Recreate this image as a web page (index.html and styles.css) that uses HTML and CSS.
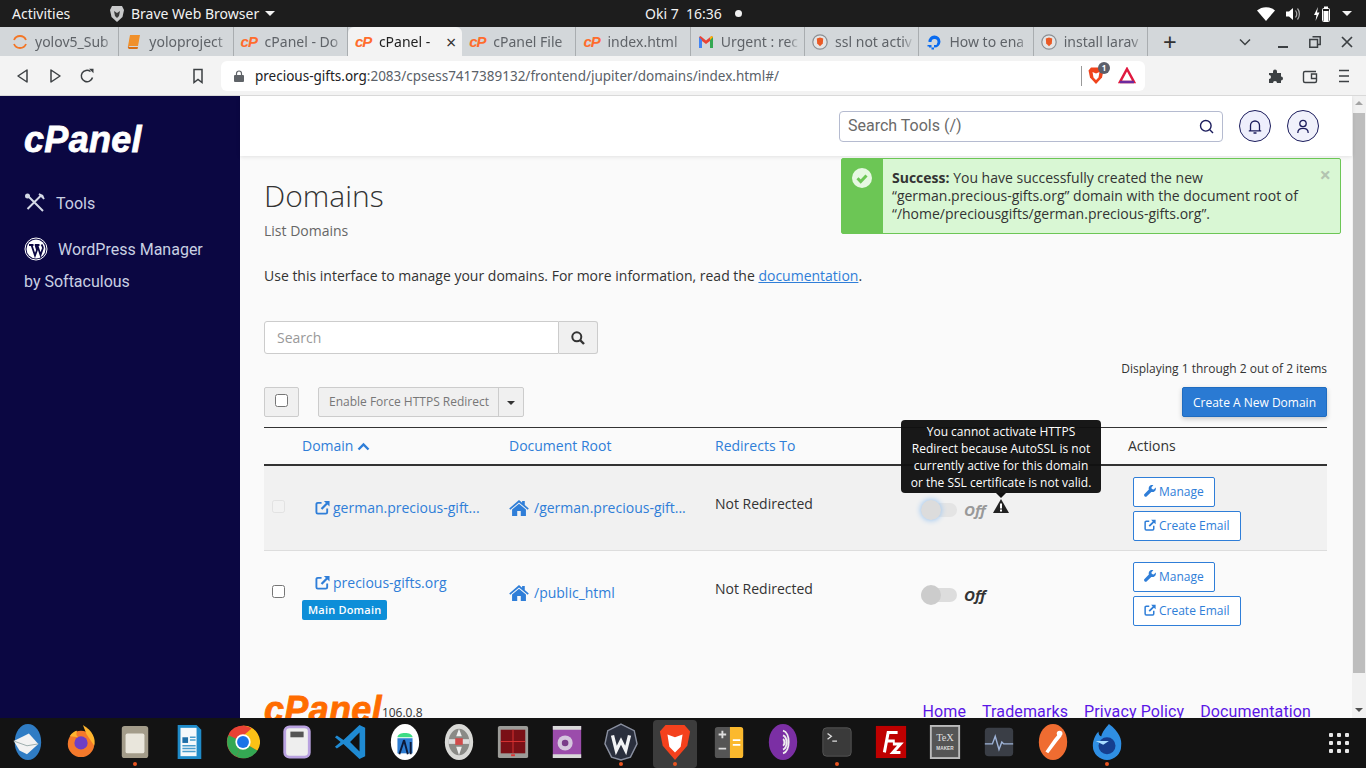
FILE: index.html
```html
<!DOCTYPE html>
<html lang="en">
<head>
  <meta charset="UTF-8" />
  <title>Domains - cPanel</title>
  <link rel="stylesheet" href="styles.css">
</head>
<body>
  <svg class="defs" width="0" height="0">
    <symbol id="i-ext" viewBox="0 0 16 16">
      <path d="M7 3H3a1.5 1.5 0 0 0-1.500 1.500v8.500A1.500 1.500 0 0 0 3 14.500h8.500A1.500 1.500 0 0 0 13 13V9" fill="none" stroke="currentColor" stroke-width="2"/>
      <path d="M9.500 1H15.500V7L13.300 4.900 7.800 10.400 6.100 8.700 11.600 3.200Z" fill="currentColor"/>
    </symbol>
    <symbol id="i-home" viewBox="0 0 22 18">
      <path d="M11 0 14.500 3V1.200H17.500V5.600L22 9.500 20.800 11 11 2.700 1.200 11 0 9.500Z" fill="currentColor"/>
      <path d="M11 4.300 18.800 10.800V18H13V12.500H9V18H3.200V10.800Z" fill="currentColor"/>
    </symbol>
    <symbol id="i-wrench" viewBox="0 0 16 16">
      <path d="M15.600 3.400 13 6 10.400 5.400 9.900 2.900 12.500.3C10.400-.3 8.300.3 7.200 1.800 6.200 3.100 6 4.700 6.500 6.100L.7 11.900C-.2 12.800-.2 14.100.7 15S2.900 15.900 3.800 15L9.700 9.200C11.200 9.700 12.900 9.400 14.200 8.300 15.700 7 16.200 5.100 15.600 3.400Z" fill="currentColor"/>
    </symbol>
    <symbol id="i-shield" viewBox="0 0 16 16">
      <circle cx="8" cy="8" r="7.200" fill="#e4e5e6" stroke="#8b8f93" stroke-width="1.200"/>
      <path d="M4.800 4.500 8 3.400 11.200 4.500 10.800 9.500 8 12.200 5.200 9.500Z" fill="#ea5a26"/>
    </symbol>
  </svg>

  <div class="topbar">
    <span class="activities">Activities</span>
    <span class="app-menu">
      <svg class="lion" viewBox="0 0 16 18"><path d="M3 1H13L15 5 13.500 12 8 17 2.500 12 1 5Z" fill="#c9cacb"/><path d="M5 6 8 8 11 6 10 11 8 13 6 11Z" fill="#3a3a3a"/></svg>
      Brave Web Browser <i class="caret"></i>
    </span>
    <span class="clock">Oki 7&nbsp; 16:36 <i class="dot"></i></span>
    <span class="tray">
      <svg width="18" height="14" viewBox="0 0 18 14"><path d="M0 3.500C5-1 13-1 18 3.500L9 14Z" fill="#fff"/></svg>
      <svg width="16" height="14" viewBox="0 0 16 14"><path d="M0 4.500H3L7 1V13L3 9.500H0Z" fill="#fff"/><path d="M9.500 3.500C11 5.500 11 8.500 9.500 10.500M11.500 1.500C14 4.500 14 9.500 11.500 12.500" fill="none" stroke="#aaa" stroke-width="1.200"/></svg>
      <svg width="18" height="16" viewBox="0 0 18 16"><path d="M5 1 1 9H3.500L2.500 15 6.500 6.500H4Z" fill="#fff"/><rect x="9.500" y="2.500" width="7" height="13" rx="1" fill="none" stroke="#fff"/><rect x="11" y="0.500" width="4" height="2" fill="#fff"/><rect x="10.500" y="5" width="5" height="10" fill="#fff"/></svg>
      <i class="caret"></i>
    </span>
  </div>

  <div class="tabstrip">
    <div class="tab"><svg class="fav" viewBox="0 0 16 16"><path d="M2 6A6.500 6.500 0 0 1 14 6M2 10A6.500 6.500 0 0 0 14 10" fill="none" stroke="#f37626" stroke-width="1.800"/></svg><span class="tab-label">yolov5_Sub</span></div>
    <div class="tab"><svg class="fav" viewBox="0 0 16 16"><path d="M4 1H14L12 12H2Z" fill="#f0902b"/><path d="M2 12C1.500 15 3 15 4 15H11.500L12 13H3.500" fill="#d96f14"/></svg><span class="tab-label">yoloproject</span></div>
    <div class="tab"><span class="cp">cP</span><span class="tab-label">cPanel - Do</span></div>
    <div class="tab active"><span class="cp">cP</span><span class="tab-label">cPanel -</span><span class="tab-x">×</span></div>
    <div class="tab"><span class="cp">cP</span><span class="tab-label">cPanel File</span></div>
    <div class="tab"><span class="cp">cP</span><span class="tab-label">index.html</span></div>
    <div class="tab"><svg class="fav" viewBox="0 0 16 16"><path d="M1 3V14H4V7L8 10 12 7V14H15V3L13.500 2 8 6.500 2.500 2Z" fill="#ea4335"/><path d="M1 3V14H4V6Z" fill="#4285f4"/><path d="M15 3V14H12V6Z" fill="#34a853"/><path d="M12 6 15 3 13.500 2 12 3.200Z" fill="#fbbc04"/></svg><span class="tab-label">Urgent : rec</span></div>
    <div class="tab"><svg class="fav"><use href="#i-shield"/></svg><span class="tab-label">ssl not activ</span></div>
    <div class="tab"><svg class="fav" viewBox="0 0 16 16"><path d="M8 13.500A6 6 0 1 0 2.500 8H5.500A3 3 0 1 1 8 11Z" fill="#0a6cf0"/><path d="M3 11H5.500V13.500H3ZM5.500 13.500H8V15.500H5.500ZM1.500 11H3V12.500H1.500Z" fill="#0a6cf0"/></svg><span class="tab-label">How to ena</span></div>
    <div class="tab"><svg class="fav"><use href="#i-shield"/></svg><span class="tab-label">install larav</span></div>
    <span class="newtab">+</span>
    <span class="win-btns">
      <svg class="win-chevron" width="12" height="8" viewBox="0 0 12 8"><path d="M1 1.500 6 6.500 11 1.500" fill="none" stroke="#3c4043" stroke-width="1.500"/></svg>
      <svg width="12" height="12" viewBox="0 0 12 12"><rect x="1" y="10" width="10" height="2" fill="#3c4043"/></svg>
      <svg width="12" height="12" viewBox="0 0 12 12"><path d="M3.500.8H11.200V8.500H9M.8 3.500H8.500V11.200H.8Z" fill="none" stroke="#3c4043" stroke-width="1.500"/></svg>
      <svg width="12" height="12" viewBox="0 0 12 12"><path d="M1 1 11 11M11 1 1 11" stroke="#3c4043" stroke-width="1.700"/></svg>
    </span>
  </div>

  <div class="toolbar">
    <svg class="nav-ico" viewBox="0 0 16 16"><path d="M12 2V14L3 8Z" fill="none" stroke="#3c4043" stroke-width="1.500" stroke-linejoin="round"/></svg>
    <svg class="nav-ico" viewBox="0 0 16 16"><path d="M4 2V14L13 8Z" fill="none" stroke="#3c4043" stroke-width="1.500" stroke-linejoin="round"/></svg>
    <svg class="nav-ico" viewBox="0 0 16 16"><path d="M13.500 9.500A5.700 5.700 0 1 1 11.500 3.500" fill="none" stroke="#3c4043" stroke-width="1.500"/><path d="M10 .8H14.500V5.300Z" fill="#3c4043"/></svg>
    <svg class="nav-ico bookmark" viewBox="0 0 16 16"><path d="M4 1.500H12V14.500L8 11.500 4 14.500Z" fill="none" stroke="#3c4043" stroke-width="1.500"/></svg>
    <div class="omnibox">
      <svg class="lock" viewBox="0 0 10 12"><path d="M2.500 5V3.500a2.500 2.500 0 0 1 5 0V5" fill="none" stroke="#5f6368" stroke-width="1.200"/><rect y="5" width="10" height="7" rx="1" fill="#5f6368"/></svg>
      <span class="url"><b>precious-gifts.org</b>:2083/cpsess7417389132/frontend/jupiter/domains/index.html#/</span>
      <span class="omni-right">
        <span class="brave-badge">
          <svg width="16" height="19" viewBox="0 0 16 18"><path d="M3 1H13L15.500 4 14 11 8 17.500 2 11 .5 4Z" fill="#f0441c"/><path d="M4.500 5.500 8 7 11.500 5.500 10.500 11 8 13.500 5.500 11Z" fill="#fff"/></svg>
          <i>1</i>
        </span>
        <svg width="18" height="17" viewBox="0 0 18 17"><path d="M9 2 16 15H2Z" fill="none" stroke="#e0193f" stroke-width="2.500"/><path d="M2 15H16" stroke="#6c2a9e" stroke-width="2.500"/></svg>
      </span>
    </div>
    <svg class="tool-ico" viewBox="0 0 16 16"><path d="M1 5H5V3.500a2 2 0 0 1 4 0V5H13V8.500a2 2 0 0 1 0 4V15H9a2 2 0 0 0-4 0H1V11a2 2 0 0 0 0-4Z" fill="#3c4043"/></svg>
    <svg class="tool-ico" viewBox="0 0 16 16"><path d="M14 3.500H3a1.500 1.500 0 0 0-1.500 1.500V13A1.500 1.500 0 0 0 3 14.500H13A1.500 1.500 0 0 0 14.500 13V6H9.500V10.500H14.500" fill="none" stroke="#3c4043" stroke-width="1.400"/></svg>
    <svg class="tool-ico" viewBox="0 0 16 16"><path d="M3 2.500H13M3 8H13M3 13.500H13" stroke="#3c4043" stroke-width="1.600"/></svg>
  </div>

  <div class="browser-page">
    <aside class="sidebar">
      <div class="side-logo">cPanel</div>
      <a class="side-link">
        <svg width="22" height="22" viewBox="0 0 22 22"><path d="M3 3 19 19M17 3.500 3.500 17" stroke="#d5d9e6" stroke-width="2"/><path d="M15 2 20 7 18.500 3.500Z" fill="#d5d9e6" stroke="#d5d9e6" stroke-width="1.500"/><circle cx="3.500" cy="4" r="2.500" fill="#d5d9e6"/></svg>
        Tools
      </a>
      <a class="side-link wp">
        <svg class="wp-ico" width="24" height="24" viewBox="0 0 24 24"><circle cx="12" cy="12" r="11" fill="none" stroke="#fff" stroke-width="1"/><circle cx="12" cy="12" r="9.500" fill="#fff"/><path d="M5 8H9.500M7.500 8 11 18.500 13 13 11.500 8M10.800 8H15.500M13.300 8 16.500 18 18.800 11.500C19.300 9.800 18 8.500 17.500 7.500" fill="none" stroke="#0b0742" stroke-width="1.800"/></svg>
        WordPress Manager by Softaculous
      </a>
    </aside>

    <div class="page-col">
      <header class="page-head">
        <div class="tool-search">
          <span>Search Tools (/)</span>
          <svg width="15" height="15" viewBox="0 0 15 15"><circle cx="6.800" cy="6.800" r="5.300" fill="none" stroke="#1b1c5c" stroke-width="1.400"/><path d="M10.800 10.800 14 14" stroke="#1b1c5c" stroke-width="1.400"/></svg>
        </div>
        <span class="round-btn"><svg width="14" height="15" viewBox="0 0 14 15"><path d="M2.500 11.500V6.500a4.500 4.500 0 0 1 9 0V11.500M.8 11.800H13.200M5.500 14H8.500" fill="none" stroke="#1b1c5c" stroke-width="1.300"/></svg></span>
        <span class="round-btn"><svg width="14" height="15" viewBox="0 0 14 15"><circle cx="7" cy="4.500" r="3.200" fill="none" stroke="#1b1c5c" stroke-width="1.300"/><path d="M1.800 14C1.800 10.500 4 9.300 7 9.300S12.200 10.500 12.200 14" fill="none" stroke="#1b1c5c" stroke-width="1.300"/></svg></span>
      </header>

      <div class="growl">
        <div class="growl-band"><svg width="20" height="20" viewBox="0 0 20 20"><circle cx="10" cy="10" r="10" fill="#e6f8e2"/><path d="M5.500 10.300 8.700 13.500 14.500 7.500" fill="none" stroke="#6cc655" stroke-width="3"/></svg></div>
        <p><strong>Success:</strong> You have successfully created the new “german.precious-gifts.org” domain with the document root of “/home/preciousgifts/german.precious-gifts.org”.</p>
        <span class="growl-x">×</span>
      </div>

      <main class="content">
        <h1>Domains</h1>
        <div class="subtitle">List Domains</div>
        <p class="intro">Use this interface to manage your domains. For more information, read the <a href="#">documentation</a>.</p>

        <div class="search-group">
          <div class="search-input">Search</div>
          <div class="search-btn"><svg width="14" height="14" viewBox="0 0 14 14"><circle cx="5.800" cy="5.800" r="4.500" fill="none" stroke="#333" stroke-width="2"/><path d="M9 9 13 13" stroke="#333" stroke-width="2.400"/></svg></div>
        </div>

        <div class="paging-note">Displaying 1 through 2 out of 2 items</div>

        <div class="list-tools">
          <div class="check-btn"><input type="checkbox"></div>
          <div class="split-btn"><span>Enable Force HTTPS Redirect</span><span class="split-caret"><i></i></span></div>
          <button class="primary-btn">Create A New Domain</button>
        </div>

        <table class="domains">
          <colgroup>
            <col class="c-check"><col class="c-wide"><col class="c-mid"><col class="c-mid"><col class="c-wide"><col class="c-wide">
          </colgroup>
          <thead>
            <tr>
              <th></th>
              <th><a>Domain <svg class="sort" width="13" height="9" viewBox="0 0 13 9"><path d="M1.500 7.500 6.500 2.500 11.500 7.500" fill="none" stroke="currentColor" stroke-width="2.400"/></svg></a></th>
              <th><a>Document Root</a></th>
              <th><a>Redirects To</a></th>
              <th><a>HTTPS Redirect</a></th>
              <th>Actions</th>
            </tr>
          </thead>
          <tbody>
            <tr class="row-off">
              <td><input type="checkbox" disabled></td>
              <td><a class="dom-link"><svg class="ico14"><use href="#i-ext"/></svg>german.precious-gift...</a></td>
              <td><a class="root-link"><svg class="ico-home"><use href="#i-home"/></svg>/german.precious-gift...</a></td>
              <td class="redir">Not Redirected</td>
              <td class="https-cell">
                <span class="toggle focus"><i></i></span><em class="off dim">Off</em>
                <svg class="warn" width="16" height="14" viewBox="0 0 16 14"><path d="M8 0 16 14H0Z" fill="#222"/><rect x="7" y="4.500" width="2" height="5" fill="#fff"/><rect x="7" y="10.500" width="2" height="2" fill="#fff"/></svg>
                <div class="tip">You cannot activate HTTPS Redirect because AutoSSL is not currently active for this domain or the SSL certificate is not valid.</div>
              </td>
              <td class="actions">
                <a class="line-btn"><svg class="ico12"><use href="#i-wrench"/></svg>Manage</a>
                <a class="line-btn"><svg class="ico12"><use href="#i-ext"/></svg>Create Email</a>
              </td>
            </tr>
            <tr>
              <td><input type="checkbox"></td>
              <td class="main-cell">
                <a class="dom-link"><svg class="ico14"><use href="#i-ext"/></svg>precious-gifts.org</a>
                <span class="label-main">Main Domain</span>
              </td>
              <td><a class="root-link"><svg class="ico-home"><use href="#i-home"/></svg>/public_html</a></td>
              <td class="redir">Not Redirected</td>
              <td class="https-cell"><span class="toggle"><i></i></span><em class="off">Off</em></td>
              <td class="actions">
                <a class="line-btn"><svg class="ico12"><use href="#i-wrench"/></svg>Manage</a>
                <a class="line-btn"><svg class="ico12"><use href="#i-ext"/></svg>Create Email</a>
              </td>
            </tr>
          </tbody>
        </table>

        <footer class="page-foot">
          <div class="foot-brand"><span class="foot-logo">cPanel</span><span class="version">106.0.8</span></div>
          <nav class="foot-links">
            <a href="#">Home</a><a href="#">Trademarks</a><a href="#">Privacy Policy</a><a href="#">Documentation</a>
          </nav>
        </footer>
      </main>
    </div>

    <div class="scrollbar">
      <i class="arrow-up"></i>
      <div class="thumb"></div>
      <i class="arrow-down"></i>
    </div>
  </div>

  <div class="dock">
    <div class="dock-item"><svg viewBox="0 0 36 40"><ellipse cx="19" cy="20" rx="14" ry="19" fill="#2f7cc4"/><path d="M4 19 20 11 30 22 18 33 10 29Z" fill="#f2f2f2"/><path d="M4 19 18 24 30 22" fill="none" stroke="#9aa" stroke-width="1"/></svg></div>
    <div class="dock-item"><svg viewBox="0 0 36 40"><circle cx="18" cy="22" r="14" fill="#f4792b"/><path d="M20 2C30 8 34 16 32 24L24 12Z" fill="#ffb52e"/><circle cx="18" cy="21" r="7" fill="#6e3fc4"/><path d="M6 14C8 10 12 8 14 8 12 12 14 15 16 15Z" fill="#ffb52e"/></svg></div>
    <div class="dock-item has-dot"><svg viewBox="0 0 36 40"><rect x="4" y="3" width="28" height="34" rx="3" fill="#a39c8a"/><rect x="8" y="11" width="20" height="21" rx="2" fill="#e9e6dc"/></svg></div>
    <div class="dock-item"><svg viewBox="0 0 36 40"><path d="M6 2H26L31 7V38H6Z" fill="#1f8bc9"/><rect x="9" y="5" width="17" height="30" fill="#f5f9fb"/><rect x="11" y="15" width="6" height="6" fill="#1f6fa8"/><path d="M19 15H25M19 18H25M11 24H25M11 27H25M11 30H25" stroke="#4a9dcc" stroke-width="1.600"/></svg></div>
    <div class="dock-item"><svg viewBox="0 0 40 40"><circle cx="20" cy="20" r="19" fill="#e94235"/><path d="M20 20 37 30A19 19 0 0 1 12 37Z" fill="#34a853"/><path d="M20 20 12 37A19 19 0 0 1 3 12Z" fill="#34a853"/><path d="M20 1A19 19 0 0 1 37 30L20 20Z" fill="#fbc116"/><path d="M3.500 10A19 19 0 0 1 30 4L20 13H9Z" fill="#e94235"/><circle cx="20" cy="20" r="9" fill="#fff"/><circle cx="20" cy="20" r="7" fill="#1a73e8"/></svg></div>
    <div class="dock-item"><svg viewBox="0 0 36 40"><rect x="5" y="4" width="26" height="32" rx="5" fill="#eee" stroke="#b9a2e0" stroke-width="3"/><rect x="11" y="9" width="14" height="6" fill="#555"/></svg></div>
    <div class="dock-item"><svg viewBox="0 0 36 40"><path d="M27 2 33 5V35L27 38 10 22 3 27 1 25 7 20 1 15 3 13 10 18Z" fill="#1f8ad2"/><path d="M27 10V30L17 20Z" fill="#111"/></svg></div>
    <div class="dock-item"><svg viewBox="0 0 36 40"><ellipse cx="18" cy="20" rx="15" ry="19" fill="#fff"/><path d="M10 15C10 9 26 9 26 15Z" fill="#3ddc84"/><path d="M10 16H26V32H10Z" fill="#2d7dd2"/><path d="M17 18 12 33M17 18 21 33M24 20V33" stroke="#0d1a3a" stroke-width="2" fill="none"/></svg></div>
    <div class="dock-item"><svg viewBox="0 0 36 40"><ellipse cx="18" cy="20" rx="15" ry="19" fill="#d9d9d6"/><ellipse cx="18" cy="20" rx="11" ry="14" fill="#8a8a86"/><path d="M7 17H29V22H7Z" fill="#ddd"/><rect x="14" y="16" width="8" height="7" fill="#d04a4a"/><path d="M18 6 21 14H15ZM18 34 15 25H21Z" fill="#eee"/></svg></div>
    <div class="dock-item"><svg viewBox="0 0 36 40"><rect x="2" y="3" width="32" height="34" rx="2" fill="#9c9c98"/><rect x="5" y="7" width="26" height="25" fill="#7a1016"/><path d="M18 7V32M5 19.500H31" stroke="#d33" stroke-width="1"/><rect x="16" y="33" width="4" height="2" fill="#d33"/></svg></div>
    <div class="dock-item"><svg viewBox="0 0 36 40"><rect x="3" y="3" width="30" height="34" fill="#9b4cab"/><path d="M3 3H33V7H3ZM3 33H33V37H3Z" fill="#d9d9d9"/><circle cx="16" cy="21" r="8" fill="#d5c6de"/><circle cx="16" cy="21" r="3.500" fill="#7a3d8a"/></svg></div>
    <div class="dock-item has-dot"><svg viewBox="0 0 36 40"><path d="M18 1 32 8 35 22 28 36 18 39 8 36 1 22 4 8Z" fill="#2a2f3d" stroke="#8a90a0" stroke-width="1.500"/><path d="M9 13 13 29 18 19 23 29 27 13" fill="none" stroke="#f2f3f5" stroke-width="3.500"/></svg></div>
    <div class="dock-item active has-dot"><svg viewBox="0 0 36 40"><path d="M8 2H28L34 9 31 24 18 39 5 24 2 9Z" fill="#f4411d"/><path d="M10 12 18 15 26 12 24 25 18 31 12 25Z" fill="#fff"/></svg></div>
    <div class="dock-item"><svg viewBox="0 0 36 40"><rect x="3" y="4" width="30" height="33" rx="3" fill="#555"/><path d="M19 4H30A3 3 0 0 1 33 7V34A3 3 0 0 1 30 37H19Z" fill="#fbb92d"/><path d="M7 12H15M11 8V16M7 27H15" stroke="#ddd" stroke-width="2"/><path d="M22 18H30M22 23H30" stroke="#fff" stroke-width="2"/></svg></div>
    <div class="dock-item"><svg viewBox="0 0 36 40"><ellipse cx="18" cy="20" rx="15" ry="19" fill="#7b2fa4"/><path d="M18 8C26 10 26 30 18 32M18 13C23 15 23 26 18 28M18 17C20 18 20 23 18 24" fill="none" stroke="#eee" stroke-width="2"/></svg></div>
    <div class="dock-item has-dot"><svg viewBox="0 0 36 40"><rect x="3" y="5" width="30" height="30" rx="4" fill="#3a3a3a" stroke="#555"/><path d="M8 11 12 14 8 17M13 19H18" fill="none" stroke="#ddd" stroke-width="1.400"/></svg></div>
    <div class="dock-item"><svg viewBox="0 0 36 40"><rect x="2" y="3" width="32" height="34" fill="#bf0000"/><path d="M11 31 15 10H25M13.500 19H22M20 22H28L20 31H28" fill="none" stroke="#fff" stroke-width="3.200"/></svg></div>
    <div class="dock-item"><svg viewBox="0 0 36 40"><rect x="3" y="3" width="30" height="34" fill="#555" stroke="#bbb" stroke-width="2"/><text x="18" y="19" class="tex-a">TeX</text><text x="18" y="28" class="tex-b">MAKER</text></svg></div>
    <div class="dock-item"><svg viewBox="0 0 36 40"><rect x="3" y="5" width="30" height="30" rx="4" fill="#3a3e46"/><path d="M3 22H11L14 14 18 28 21 20 23 22H33" fill="none" stroke="#9fb4d8" stroke-width="1.500"/></svg></div>
    <div class="dock-item"><svg viewBox="0 0 36 40"><ellipse cx="18" cy="20" rx="15" ry="19" fill="#ef6c31"/><path d="M10 30 19 17 24 11 27 14 22 20 13 32Z" fill="#fff"/><circle cx="25" cy="11" r="3" fill="#fff"/></svg></div>
    <div class="dock-item has-dot"><svg viewBox="0 0 36 40"><path d="M20 1C31 9 34 18 33 24A15 15 0 0 1 3 24C3 17 7 11 9 9 9 13 11 14 12 14 13 9 17 5 20 1Z" fill="#2f8fe4"/><circle cx="18" cy="24" r="9" fill="#163e8e"/><path d="M6 19H20L14 23Z" fill="#a8dcff"/></svg></div>
    <div class="dock-spacer"></div>
    <div class="dock-grid"><i></i><i></i><i></i><i></i><i></i><i></i><i></i><i></i><i></i></div>
  </div>
</body>
</html>
```

FILE: styles.css
```css
* {
  box-sizing: border-box;
}
html, body {
  height: 100%;
}
body {
  margin: 0;
  display: flex;
  flex-direction: column;
  height: 768px;
  overflow: hidden;
  font-family: "Open Sans", sans-serif;
  font-size: 14px;
  color: #333;
  background: #fafafa;
}
a {
  color: #2f7ed8;
}
.defs {
  position: absolute;
}

/* gnome bar */
.topbar {
  height: 27px;
  flex: none;
  display: flex;
  align-items: center;
  position: relative;
  background: #1d1d1d;
  color: #f2f2f2;
  font-family: "Noto Sans", sans-serif;
  font-size: 14px;
}
.activities {
  margin-left: 12px;
  width: 97px;
}
.app-menu {
  display: flex;
  align-items: center;
  gap: 6px;
}
.lion {
  width: 16px;
  height: 18px;
}
.caret {
  display: inline-block;
  width: 0;
  height: 0;
  border-left: 5px solid transparent;
  border-right: 5px solid transparent;
  border-top: 5px solid #f2f2f2;
}
.clock {
  position: absolute;
  left: 645px;
  display: flex;
  align-items: center;
  gap: 4px;
}
.dot {
  width: 7px;
  height: 7px;
  margin-left: 9px;
  border-radius: 50%;
  background: #f2f2f2;
}
.tray {
  margin-left: auto;
  margin-right: 14px;
  display: flex;
  align-items: center;
  gap: 11px;
}

/* tabs */
.tabstrip {
  height: 29px;
  flex: none;
  display: flex;
  align-items: center;
  padding-left: 5px;
  background: #d3d7da;
  font-family: "Noto Sans", sans-serif;
  font-size: 14px;
  color: #5f6368;
}
.tab {
  width: 114.3px;
  height: 29px;
  flex: none;
  display: flex;
  align-items: center;
  gap: 7px;
  padding: 0 4px 0 7px;
  overflow: hidden;
  border-right: 1px solid #a9adb0;
  background-clip: padding-box;
}
.tab.active {
  background: #f3f3f3;
  color: #222;
  border-right: 0;
  border-radius: 6px 6px 0 0;
}
.fav {
  width: 16px;
  height: 16px;
  flex: none;
}
.cp {
  width: 17px;
  flex: none;
  font-family: "Liberation Sans", sans-serif;
  font-weight: 700;
  font-style: italic;
  font-size: 15px;
  letter-spacing: -1px;
  color: #ff6c2c;
}
.tab-label {
  flex: 1;
  min-width: 0;
  white-space: nowrap;
  overflow: hidden;
  -webkit-mask-image: linear-gradient(to right, #000 85%, transparent);
  mask-image: linear-gradient(to right, #000 85%, transparent);
}
.tab-x {
  flex: none;
  margin-right: 2px;
  font-size: 18px;
  color: #333;
}
.newtab {
  width: 44px;
  text-align: center;
  font-size: 24px;
  line-height: 24px;
  color: #333;
}
.win-btns {
  margin-left: 47px;
  display: flex;
  align-items: center;
  gap: 20px;
}
.win-chevron {
  margin-right: 6px;
}

/* url bar */
.toolbar {
  height: 40px;
  flex: none;
  display: flex;
  align-items: center;
  padding-left: 15px;
  background: #f3f3f3;
  border-bottom: 1px solid #d9d9d9;
}
.nav-ico {
  width: 16px;
  height: 16px;
  margin-right: 16px;
}
.bookmark {
  margin: 0 15px 0 79px;
}
.omnibox {
  width: 924px;
  height: 30px;
  display: flex;
  align-items: center;
  padding: 0 9px 0 13px;
  background: #fff;
  border-radius: 6px;
}
.lock {
  width: 10px;
  height: 12px;
  margin-right: 11px;
}
.url {
  font-family: "Noto Sans", sans-serif;
  font-size: 13.5px;
  color: #5a6168;
  white-space: nowrap;
}
.url b {
  font-weight: 400;
  color: #202124;
}
.omni-right {
  margin-left: auto;
  display: flex;
  align-items: center;
  gap: 14px;
  padding-left: 6px;
  border-left: 1px solid #999;
  height: 20px;
}
.brave-badge {
  position: relative;
  display: flex;
  align-items: center;
}
.brave-badge i {
  position: absolute;
  top: -4px;
  left: 10px;
  width: 12px;
  height: 12px;
  border-radius: 50%;
  background: #5c5f6b;
  color: #fff;
  font: 700 8px/12px "Noto Sans", sans-serif;
  text-align: center;
}
.tool-ico {
  width: 16px;
  height: 16px;
  margin-left: 18px;
}
.omnibox + .tool-ico {
  margin-left: 123px;
}

/* page area */
.browser-page {
  flex: 1;
  min-height: 0;
  display: flex;
  overflow: hidden;
}
.sidebar {
  width: 240px;
  flex: none;
  padding: 0 24px;
  background: #0b0742;
  color: #c9d0e2;
  font-family: Roboto, sans-serif;
  font-size: 16px;
}
.side-logo {
  margin-top: 24px;
  margin-bottom: 32px;
  height: 40px;
  color: #fff;
  font-family: "Liberation Sans", sans-serif;
  font-weight: 700;
  font-style: italic;
  font-size: 36px;
  line-height: 40px;
  letter-spacing: .3px;
  -webkit-text-stroke: .8px #fff;
}
.side-link {
  display: flex;
  align-items: center;
  gap: 10px;
  color: #c9d0e2;
  margin-bottom: 20px;
}
.side-link.wp {
  display: block;
  width: 190px;
  line-height: 32px;
}
.wp-ico {
  vertical-align: -6px;
  margin-right: 6px;
}

.page-col {
  flex: 1;
  min-width: 0;
  position: relative;
  display: flex;
  flex-direction: column;
}
.page-head {
  height: 60px;
  flex: none;
  display: flex;
  align-items: center;
  justify-content: flex-end;
  gap: 16px;
  padding-right: 33px;
  background: #fff;
  box-shadow: 0 1px 4px rgba(0, 0, 0, .1);
}
.tool-search {
  width: 384px;
  height: 31px;
  display: flex;
  align-items: center;
  justify-content: space-between;
  padding: 0 8px;
  border: 1px solid #b5bbd0;
  border-radius: 4px;
  color: #6a6a6a;
  font-family: Roboto, sans-serif;
  font-size: 16px;
}
.tool-search span {
  margin-bottom: 2px;
}
.round-btn {
  width: 32px;
  height: 32px;
  display: flex;
  align-items: center;
  justify-content: center;
  border: 1px solid #1b1c5c;
  border-radius: 50%;
  background: #eeeffc;
}
.page-head .round-btn:last-child {
  background: #f0f1fb;
}

/* success message */
.growl {
  position: absolute;
  top: 62px;
  left: 601px;
  width: 500px;
  height: 76px;
  display: flex;
  background: #d9f7d4;
  border: 1px solid #6cc655;
  border-radius: 2px;
  z-index: 3;
}
.growl-band {
  width: 41px;
  flex: none;
  padding: 9px 0 0 10px;
  background: #6cc655;
}
.growl p {
  margin: 10px 30px 0 9px;
  line-height: 18px;
  color: #333;
}
.growl-x {
  position: absolute;
  top: 6px;
  right: 9px;
  font-size: 20px;
  line-height: 20px;
  font-weight: 700;
  color: #b3c4b1;
}

.content {
  flex: 1;
  padding: 0 25px 0 24px;
}
h1 {
  margin: 21px 0 0;
  font-size: 30px;
  line-height: 38px;
  font-weight: 300;
  color: #333;
}
.subtitle {
  margin-top: 6px;
  line-height: 20px;
  color: #666;
}
.intro {
  margin: 25px 0 0;
  line-height: 20px;
  color: #333;
}
.intro a {
  color: #2f7ed8;
}

.search-group {
  display: flex;
  width: 334px;
  height: 33px;
  margin-top: 35px;
}
.search-input {
  flex: 1;
  padding: 6px 12px;
  background: #fff;
  border: 1px solid #ccc;
  border-radius: 3px 0 0 3px;
  color: #999;
}
.search-btn {
  width: 39px;
  display: flex;
  align-items: center;
  justify-content: center;
  background: #f0f0f0;
  border: 1px solid #ccc;
  border-left: 0;
  border-radius: 0 3px 3px 0;
}
.paging-note {
  margin-top: 6px;
  font-size: 12px;
  line-height: 17px;
  text-align: right;
  color: #333;
}
.list-tools {
  display: flex;
  align-items: center;
  height: 30px;
  margin-top: 10px;
}
.check-btn {
  width: 35px;
  height: 30px;
  margin-right: 19px;
  display: flex;
  align-items: center;
  justify-content: center;
  padding-bottom: 4px;
  background: #f0f0f0;
  border: 1px solid #ccc;
  border-radius: 2px;
}
input[type="checkbox"] {
  width: 13px;
  height: 13px;
  margin: 0;
}
.split-btn {
  display: flex;
  height: 30px;
  background: #f0f0f0;
  border: 1px solid #ccc;
  border-radius: 2px;
  color: #777;
  font-size: 12px;
  line-height: 28px;
}
.split-btn > span:first-child {
  padding: 0 9px 0 10px;
  border-right: 1px solid #ccc;
}
.split-caret {
  width: 24px;
  display: flex;
  align-items: center;
  justify-content: center;
}
.split-caret i {
  margin-top: 2px;
  border-left: 4px solid transparent;
  border-right: 4px solid transparent;
  border-top: 4px solid #333;
}
.primary-btn {
  margin-left: auto;
  width: 145px;
  height: 30px;
  padding: 0;
  background: #2a7ad3;
  color: #fff;
  border: 1px solid #1f6cc0;
  border-radius: 2px;
  font-family: "Open Sans", sans-serif;
  font-size: 12px;
  box-shadow: 0 2px 5px rgba(0, 0, 0, .2);
}

/* table */
.domains {
  width: 100%;
  margin-top: 10px;
  table-layout: fixed;
  border-collapse: collapse;
}
.c-check {
  width: 30px;
}
.c-wide {
  width: 207px;
}
.c-mid {
  width: 206px;
}
.domains th {
  height: 37px;
  padding: 0 8px;
  text-align: left;
  font-weight: 400;
  color: #333;
  border-top: 1px solid #333;
  border-bottom: 2px solid #333;
}
.domains th a {
  color: #2f7ed8;
}
.sort {
  vertical-align: 0;
}
.domains td {
  height: 85px;
  padding: 0 8px;
  border-bottom: 1px solid #ddd;
  vertical-align: middle;
  position: relative;
}
.domains tbody tr:last-child td {
  border-bottom: 0;
}
.row-off {
  background: #f1f1f1;
}
.domains .row-off td {
  height: 86px;
}
.domains tbody tr:last-child td {
  height: 84px;
}
.domains td:first-child {
  padding: 0 0 0 8px;
}
.row-off input {
  opacity: .4;
}
.dom-link, .root-link {
  display: flex;
  align-items: center;
  color: #2f7ed8;
  white-space: nowrap;
}
.dom-link {
  margin-left: 13px;
}
.domains td.main-cell {
  padding-top: 8px;
}
.ico14 {
  width: 15px;
  height: 15px;
  flex: none;
  margin-right: 3px;
}
.ico-home {
  width: 20px;
  height: 16px;
  flex: none;
  margin-right: 5px;
}
.ico12 {
  width: 12px;
  height: 12px;
  margin-right: 3px;
  vertical-align: -1px;
}
.label-main {
  display: inline-block;
  height: 20px;
  margin-top: 8px;
  padding: 0 6px;
  background: #0d8ed8;
  border-radius: 2px;
  color: #fff;
  font-size: 11px;
  font-weight: 600;
  line-height: 19px;
  letter-spacing: .2px;
}
.domains td.redir {
  padding-bottom: 9px;
  color: #333;
}
.domains td.https-cell {
  padding-top: 4px;
}
.toggle {
  display: inline-block;
  width: 36px;
  height: 14px;
  position: relative;
  vertical-align: middle;
  background: #ddd;
  border-radius: 7px;
}
.toggle i {
  position: absolute;
  left: 0;
  top: -3px;
  width: 20px;
  height: 20px;
  background: #ccc;
  border-radius: 50%;
}
.toggle.focus {
  background: #e4e4e4;
}
.toggle.focus i {
  background: #dcdcdc;
  box-shadow: 0 0 5px 1px #a9cdf2;
}
.off {
  margin-left: 7px;
  font-size: 15px;
  font-weight: 700;
  font-style: italic;
  vertical-align: middle;
  color: #333;
}
.off.dim {
  color: #999;
}
.warn {
  margin-left: 4px;
  vertical-align: 1px;
}
.tip {
  position: absolute;
  left: -12px;
  top: -46px;
  width: 200px;
  height: 73px;
  padding: 3px 6px;
  background: rgba(17, 17, 17, .97);
  border-radius: 4px;
  color: #fff;
  font-size: 12px;
  line-height: 17px;
  text-align: center;
  z-index: 2;
}
.tip::after {
  content: "";
  position: absolute;
  left: 95px;
  bottom: -5px;
  border-left: 5px solid transparent;
  border-right: 5px solid transparent;
  border-top: 5px solid #111;
}
.domains td.actions {
  padding: 2px 0 0 13px;
}
.line-btn {
  display: block;
  width: fit-content;
  height: 30px;
  margin: 4px 0;
  padding: 0 10px;
  background: #fff;
  border: 1px solid #2f7ed8;
  border-radius: 2px;
  color: #2f7ed8;
  font-size: 12px;
  line-height: 28px;
}

.page-foot {
  display: flex;
  justify-content: space-between;
  margin-top: 55px;
}
.foot-brand {
  display: flex;
  align-items: flex-end;
}
.foot-logo {
  color: #ff6c00;
  font-family: "Liberation Sans", sans-serif;
  font-weight: 700;
  font-style: italic;
  font-size: 36px;
  line-height: 40px;
  letter-spacing: .3px;
  -webkit-text-stroke: .8px #ff6c00;
}
.version {
  position: relative;
  top: -9px;
  font-size: 12px;
  color: #333;
}
.foot-links {
  display: flex;
  gap: 16px;
  padding-top: 12px;
  margin-right: 16px;
  font-family: Roboto, sans-serif;
  font-size: 16px;
  letter-spacing: .12px;
}
.foot-links a {
  color: #5a16e6;
}

.scrollbar {
  width: 14px;
  flex: none;
  display: flex;
  flex-direction: column;
  align-items: center;
  padding-top: 5px;
  background: #f1f1f1;
}
.thumb {
  width: 12px;
  height: 560px;
  margin: 8px 0 35px;
  background: #bdbdbd;
}
.arrow-up {
  border-left: 4px solid transparent;
  border-right: 4px solid transparent;
  border-bottom: 4px solid #a3a3a3;
}
.arrow-down {
  border-left: 4px solid transparent;
  border-right: 4px solid transparent;
  border-top: 4px solid #505050;
}

/* launcher */
.dock {
  height: 50px;
  flex: none;
  display: flex;
  background: #131313;
}
.dock-item {
  width: 54px;
  height: 50px;
  flex: none;
  position: relative;
  display: flex;
  align-items: flex-start;
  justify-content: center;
  padding-top: 5px;
}
.dock-item svg {
  height: 38px;
  width: 34px;
}
.dock-item.active {
  background: #3c3c3c;
  width: 44px;
  margin: 2px 5px 0;
  padding-top: 3px;
  height: 48px;
  border-radius: 4px;
}
.has-dot::after {
  content: "";
  position: absolute;
  left: 50%;
  bottom: 2px;
  width: 4px;
  height: 4px;
  margin-left: -2px;
  border-radius: 50%;
  background: #e95420;
}
.tex-a {
  fill: #ddd;
  font: 11px "Liberation Serif", serif;
  text-anchor: middle;
}
.tex-b {
  fill: #ddd;
  font: 700 5px "Liberation Sans", sans-serif;
  text-anchor: middle;
}
.dock-spacer {
  flex: 1;
}
.dock-grid {
  width: 20px;
  margin: 15px 17px 0 0;
  height: 20px;
  display: grid;
  grid-template-columns: repeat(3, 4px);
  grid-auto-rows: 4px;
  gap: 4px;
}
.dock-grid i {
  background: #e8e8e8;
  border-radius: 1px;
}
```
